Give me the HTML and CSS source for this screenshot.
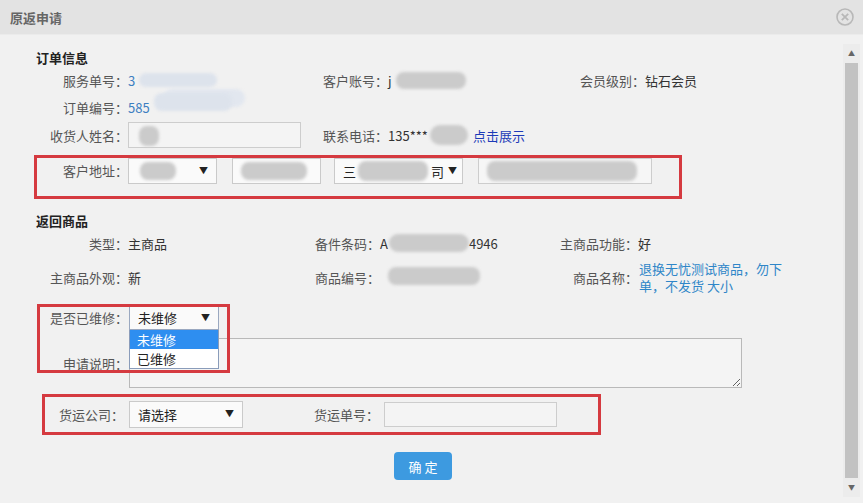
FILE: index.html
```html
<!DOCTYPE html>
<html lang="zh-CN">

<head>
    <meta charset="UTF-8">
    <meta name="viewport" content="width=device-width, initial-scale=1.0">
    <title>原返申请</title>
    <link rel="stylesheet" href="styles.css">
</head>

<body>
    <div class="dialog">
        <div class="dialog-head">
            <span class="dialog-title">原返申请</span>
            <svg class="close" width="20" height="20" viewBox="0 0 20 20">
                <circle cx="10" cy="10" r="8" fill="none" stroke="#b8b8b8" stroke-width="1.6" />
                <path d="M6.8 6.8 L13.2 13.2 M13.2 6.8 L6.8 13.2" stroke="#b8b8b8" stroke-width="1.8" />
            </svg>
        </div>

        <div class="dialog-body">
            <div class="form">
                <h3 class="section-title">订单信息</h3>

                <div class="row row-info">
                    <div class="cell cell-a">
                        <span class="label">服务单号：</span>
                        <span class="value blue">3</span>
                        <span class="blob blob-light blob-sn"></span>
                    </div>
                    <div class="cell cell-b shift">
                        <span class="label">客户账号：</span>
                        <span class="value">j</span>
                        <span class="blob blob-gray blob-account"></span>
                    </div>
                    <div class="cell cell-c free">
                        <span class="label">会员级别：</span>
                        <span class="value">钻石会员</span>
                    </div>
                </div>

                <div class="row row-info row-order">
                    <div class="cell cell-a">
                        <span class="label">订单编号：</span>
                        <span class="value blue">585</span>
                        <span class="blob blob-light blob-order"></span>
                    </div>
                </div>

                <div class="row row-input">
                    <div class="cell cell-a">
                        <span class="label">收货人姓名：</span>
                        <div class="input input-name"><span class="blob blob-gray blob-name"></span></div>
                    </div>
                    <div class="cell cell-b shift">
                        <span class="label">联系电话：</span>
                        <span class="value">135***</span>
                        <span class="blob blob-gray blob-phone"></span>
                        <a class="show-link">点击展示</a>
                    </div>
                </div>

                <div class="address-box">
                    <span class="label addr-label">客户地址：</span>
                    <div class="select sel-province"><span class="blob blob-gray blob-s1"></span><span class="arrow">▼</span></div>
                    <div class="select sel-city"><span class="blob blob-gray blob-s2"></span></div>
                    <div class="select sel-area"><span class="sel-text">三</span><span class="blob blob-gray blob-s3"></span><span class="sel-text">司</span><span class="arrow">▼</span></div>
                    <div class="input input-street"><span class="blob blob-gray blob-s4"></span></div>
                </div>

                <h3 class="section-title section-goods">返回商品</h3>

                <div class="row row-info">
                    <div class="cell cell-a">
                        <span class="label">类型：</span>
                        <span class="value">主商品</span>
                    </div>
                    <div class="cell cell-b">
                        <span class="label">备件条码：</span>
                        <span class="value">A</span>
                        <span class="blob blob-gray blob-code"></span>
                        <span class="value">4946</span>
                    </div>
                    <div class="cell cell-c">
                        <span class="label">主商品功能：</span>
                        <span class="value">好</span>
                    </div>
                </div>

                <div class="row row-goods">
                    <div class="cell cell-a">
                        <span class="label">主商品外观：</span>
                        <span class="value">新</span>
                    </div>
                    <div class="cell cell-b">
                        <span class="label">商品编号：</span>
                        <span class="blob blob-gray blob-goods"></span>
                    </div>
                    <div class="cell cell-c">
                        <span class="label">商品名称：</span>
                        <span class="value goods-name">退换无忧测试商品，勿下单，不发货 大小</span>
                    </div>
                </div>

                <div class="repair-area">
                    <div class="row row-repair">
                        <span class="label">是否已维修：</span>
                        <div class="select sel-repair"><span class="sel-text">未维修</span><span class="arrow">▼</span></div>
                    </div>
                    <div class="row row-remark">
                        <span class="label">申请说明：</span>
                        <textarea class="remark"></textarea>
                    </div>
                    <ul class="option-list">
                        <li class="option active">未维修</li>
                        <li class="option">已维修</li>
                    </ul>
                    <div class="mark-box"></div>
                </div>

                <div class="ship-box">
                    <span class="label ship-label">货运公司：</span>
                    <div class="select sel-ship"><span class="sel-text">请选择</span><span class="arrow">▼</span></div>
                    <span class="label ship-no-label">货运单号：</span>
                    <div class="input input-ship"></div>
                </div>

                <div class="actions">
                    <button class="btn-ok">确 定</button>
                </div>
            </div>

            <div class="scrollbar">
                <span class="scroll-arrow">▲</span>
                <div class="scroll-thumb"></div>
                <span class="scroll-arrow">▼</span>
            </div>
        </div>
    </div>
</body>

</html>
```

FILE: styles.css
```css
body {
    margin: 0;
    padding: 0;
    font-family: "Noto Sans CJK SC", "Liberation Sans", sans-serif;
    font-size: 13px;
    color: #333;
    background-color: #f1f1f1;
}

.dialog {
    width: 863px;
    height: 503px;
    overflow: hidden;
    background-color: #f1f1f1;
}

.dialog-head {
    height: 34px;
    display: flex;
    align-items: center;
    justify-content: space-between;
    padding: 0 8px 0 10px;
    background-color: #e3e3e3;
    border-bottom: 1px solid #ebebeb;
}

.dialog-title {
    font-weight: bold;
    color: #666;
    font-size: 13px;
}

.dialog-body {
    display: flex;
    height: 468px;
}

.form {
    width: 807px;
    padding: 13px 0 0 36px;
}

.section-title {
    margin: 0;
    font-size: 13px;
    line-height: 20px;
    font-weight: bold;
    color: #222;
}

.section-goods {
    margin-top: 12px;
}

.row {
    display: flex;
    align-items: center;
}

.row-info {
    height: 20px;
    margin-top: 2px;
}

.row-order {
    margin-top: 7px;
}

.row-input {
    height: 26px;
    margin-top: 5px;
}

.row-goods {
    height: 34px;
    margin-top: 7px;
}

.cell {
    display: flex;
    align-items: center;
    height: 100%;
}

.cell-a {
    width: 279px;
}

.cell-b {
    width: 230px;
}

.cell-b.shift {
    padding-left: 8px;
    width: 222px;
}

.label {
    color: #555;
    white-space: nowrap;
}

.cell-a .label {
    width: 92px;
    text-align: right;
}

.cell-c .label {
    width: 93px;
    text-align: right;
}

.cell-c.free {
    padding-left: 35px;
}

.cell-c.free .label {
    width: auto;
}

.value {
    color: #333;
    white-space: nowrap;
}

.blue {
    color: #3d7fc1;
}

.goods-name {
    width: 150px;
    white-space: normal;
    line-height: 17px;
    color: #2f86c8;
    margin-left: 1px;
}

.show-link {
    color: #1d3bb8;
    margin-left: 5px;
    cursor: pointer;
}

/* blurred private data */
.blob {
    display: inline-block;
    filter: blur(1.5px);
    border-radius: 8px;
}

.blob-light {
    background-color: #dde3ec;
}

.blob-gray {
    background-color: #cbcbcb;
}

.blob-sn {
    width: 78px;
    height: 14px;
    margin-left: 4px;
    box-shadow: 26px 18px 0 2px #e2e7ef;
}

.blob-order {
    width: 78px;
    height: 18px;
    margin-left: 4px;
    margin-top: -10px;
}

.blob-account {
    width: 70px;
    height: 17px;
    margin-left: 4px;
}

.blob-name {
    width: 20px;
    height: 20px;
    margin: 2px 0 0 10px;
}

.blob-phone {
    width: 38px;
    height: 20px;
    border-radius: 10px;
    margin-left: 2px;
}

.blob-s1 {
    width: 36px;
    height: 18px;
    margin-left: 11px;
}

.blob-s2 {
    width: 66px;
    height: 18px;
    margin-left: 8px;
}

.blob-s3 {
    width: 70px;
    height: 20px;
    margin: 0 3px 0 2px;
}

.blob-s4 {
    width: 150px;
    height: 20px;
    margin-left: 8px;
}

.blob-code {
    width: 80px;
    height: 18px;
    margin-left: 1px;
    border-radius: 9px;
}

.blob-goods {
    width: 92px;
    height: 18px;
    margin-left: 8px;
    margin-top: -2px;
}

/* form controls */
.input {
    display: flex;
    align-items: center;
    height: 24px;
    border: 1px solid #cdcdcd;
    background-color: #f4f4f4;
    box-sizing: border-box;
}

.input-name {
    width: 173px;
    height: 26px;
}

.select {
    display: flex;
    align-items: center;
    position: relative;
    height: 26px;
    box-sizing: border-box;
    border: 1px solid #cacaca;
    background-color: #fafafa;
    padding-left: 8px;
    color: #222;
}

.sel-text {
    white-space: nowrap;
}

.arrow {
    position: absolute;
    right: 8px;
    top: 5px;
    font-size: 9px;
    color: #222;
}

.address-box {
    display: flex;
    align-items: flex-start;
    width: 648px;
    height: 44px;
    box-sizing: border-box;
    margin: 7px 0 0 -2px;
    border: 3px solid #d53a40;
}

.addr-label {
    width: 91px;
    text-align: right;
    line-height: 26px;
}

.sel-province {
    width: 89px;
    padding-left: 0;
}

.sel-city {
    width: 89px;
    margin-left: 15px;
    padding-left: 0;
}

.sel-area {
    width: 129px;
    margin-left: 13px;
}

.sel-area .arrow {
    right: 5px;
}

.input-street {
    width: 174px;
    height: 26px;
    margin-left: 15px;
    background-color: #f6f6f6;
}

/* repair + remark */
.repair-area {
    position: relative;
    margin-top: 11px;
}

.row-repair {
    height: 25px;
}

.row-repair .label,
.row-remark .label {
    width: 92px;
    text-align: right;
}

.sel-repair {
    width: 90px;
    height: 25px;
    margin-left: 1px;
    border-color: #9aa8c0;
}

.row-remark {
    margin-top: 8px;
}

.remark {
    width: 613px;
    height: 50px;
    box-sizing: border-box;
    margin: 0 0 0 1px;
    border: 1px solid #b9b9b9;
    background-color: #f4f4f4;
    resize: both;
}

.option-list {
    position: absolute;
    left: 93px;
    top: 25px;
    width: 90px;
    margin: 0;
    padding: 0;
    list-style: none;
    box-sizing: border-box;
    border: 1px solid #8a9cba;
    border-top: none;
    background-color: #fff;
}

.option {
    height: 19px;
    line-height: 19px;
    padding-left: 7px;
    color: #222;
}

.option.active {
    background-color: #2e8ef0;
    color: #fff;
}

.mark-box {
    position: absolute;
    left: 1px;
    top: -1px;
    width: 193px;
    height: 69px;
    box-sizing: border-box;
    border: 3px solid #d53a40;
}

/* shipping */
.ship-box {
    display: flex;
    align-items: center;
    width: 559px;
    height: 41px;
    box-sizing: border-box;
    margin: 6px 0 0 6px;
    border: 3px solid #d53a40;
}

.ship-label {
    width: 79px;
    text-align: right;
}

.sel-ship {
    width: 114px;
    height: 27px;
    margin-left: 5px;
}

.ship-no-label {
    margin-left: 71px;
    width: 65px;
}

.input-ship {
    width: 173px;
    height: 25px;
    margin-left: 5px;
}

.actions {
    margin-top: 17px;
    padding-left: 358px;
}

.btn-ok {
    width: 58px;
    height: 28px;
    border: none;
    border-radius: 4px;
    background-color: #3d9ae0;
    color: #fff;
    font-family: "Noto Sans CJK SC", sans-serif;
    font-size: 13px;
    cursor: pointer;
}

.btn-ok:hover {
    background-color: #2d86c9;
}

/* fake scrollbar */
.scrollbar {
    width: 17px;
    height: 453px;
    margin-top: 9px;
    display: flex;
    flex-direction: column;
    align-items: center;
    background-color: #ececec;
}

.scroll-arrow {
    font-size: 7px;
    color: #666;
    height: 19px;
    line-height: 19px;
}

.scroll-thumb {
    flex: 1;
    width: 13px;
    background-color: #c2c2c2;
}
```
